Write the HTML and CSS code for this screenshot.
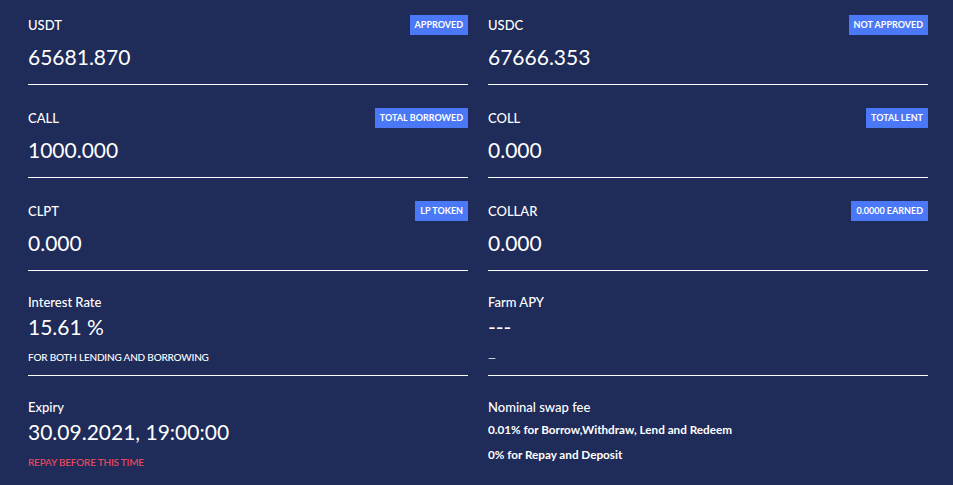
FILE: index.html
```html
<!DOCTYPE html>
<html lang="en">
  <head>
    <meta charset="UTF-8" />
    <meta name="viewport" content="width=device-width, initial-scale=1.0" />
    <title>Pool Overview</title>
    <link rel="stylesheet" href="styles.css">
  </head>
  <body>
    <div class="stats">
      <div class="stat">
        <div class="stat-head">
          <span class="stat-label">USDT</span>
          <span class="badge">Approved</span>
        </div>
        <div class="stat-value">65681.870</div>
      </div>
      <div class="stat">
        <div class="stat-head">
          <span class="stat-label">USDC</span>
          <span class="badge">Not approved</span>
        </div>
        <div class="stat-value">67666.353</div>
      </div>

      <div class="stat">
        <div class="stat-head">
          <span class="stat-label">CALL</span>
          <span class="badge">Total borrowed</span>
        </div>
        <div class="stat-value">1000.000</div>
      </div>
      <div class="stat">
        <div class="stat-head">
          <span class="stat-label">COLL</span>
          <span class="badge">Total lent</span>
        </div>
        <div class="stat-value">0.000</div>
      </div>

      <div class="stat">
        <div class="stat-head">
          <span class="stat-label">CLPT</span>
          <span class="badge">LP token</span>
        </div>
        <div class="stat-value">0.000</div>
      </div>
      <div class="stat">
        <div class="stat-head">
          <span class="stat-label">COLLAR</span>
          <span class="badge">0.0000 earned</span>
        </div>
        <div class="stat-value">0.000</div>
      </div>

      <div class="stat stat-info">
        <div class="stat-label">Interest Rate</div>
        <div class="stat-value">15.61 %</div>
        <div class="stat-note">For both lending and borrowing</div>
      </div>
      <div class="stat stat-info">
        <div class="stat-label">Farm APY</div>
        <div class="stat-value">---</div>
        <div class="stat-note">&mdash;</div>
      </div>

      <div class="stat stat-info stat-last">
        <div class="stat-label">Expiry</div>
        <div class="stat-value">30.09.2021, 19:00:00</div>
        <div class="stat-note warn">Repay before this time</div>
      </div>
      <div class="stat stat-info stat-last">
        <div class="stat-label">Nominal swap fee</div>
        <p class="fee">0.01% for Borrow,Withdraw, Lend and Redeem</p>
        <p class="fee">0% for Repay and Deposit</p>
      </div>
    </div>
  </body>
</html>
```

FILE: styles.css
```css
html {
  box-sizing: border-box;
  font-family: Lato, "Open Sans", Arial, sans-serif;
  color: #fff;
  background-color: #1f2b58;
  font-size: 13px;
}
body {
  margin: 0;
  min-height: 100vh;
  background: #1f2b58;
}
.stats {
  display: grid;
  grid-template-columns: 1fr 1fr;
  column-gap: 20px;
  row-gap: 23px;
  padding: 15px 25px 0 28px;
}
.stat {
  padding-bottom: 14px;
  border-bottom: 1px solid #fff;
}
.stat-head {
  display: flex;
  justify-content: space-between;
  align-items: center;
  height: 20px;
}
.stat-label {
  font-size: 13px;
  line-height: 16px;
  font-weight: 500;
}
.badge {
  display: inline-block;
  height: 20px;
  line-height: 20px;
  padding: 0 5px;
  background: #4a78f6;
  font-size: 9px;
  font-weight: 700;
  text-transform: uppercase;
  white-space: nowrap;
}
.stat-value {
  margin-top: 9px;
  font-size: 21px;
  line-height: 26px;
}
.stat-info {
  padding-bottom: 12px;
}
.stat-info .stat-value {
  margin-top: 4px;
}
.stat-note {
  margin-top: 11px;
  font-size: 10px;
  line-height: 12px;
  font-weight: 500;
  letter-spacing: -0.2px;
  text-transform: uppercase;
}
.warn {
  color: #ef4a5c;
}
.stat-last {
  border-bottom: none;
}
.fee {
  margin: 7px 0 0;
  font-size: 11.7px;
  line-height: 14px;
  font-weight: 700;
}
.fee + .fee {
  margin-top: 11px;
}
```
